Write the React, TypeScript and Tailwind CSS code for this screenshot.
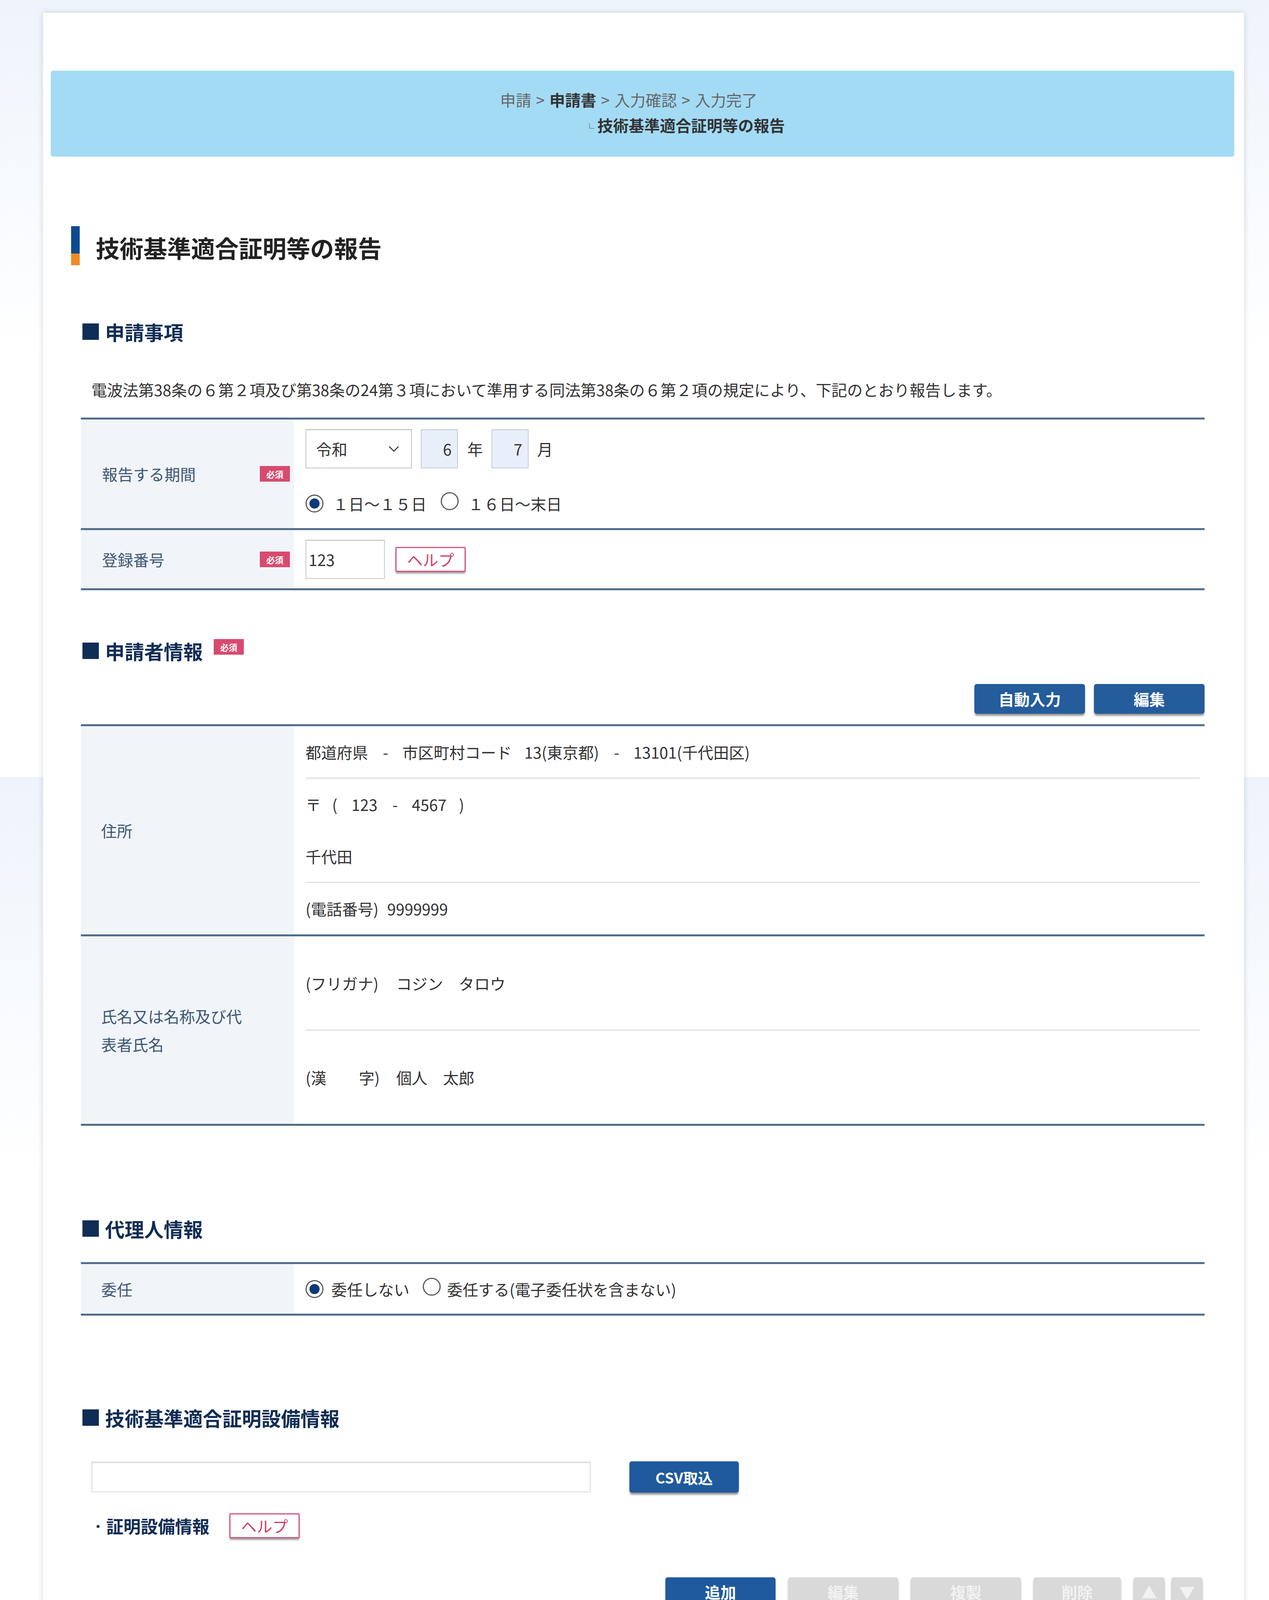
import React from "react";

function Badge() {
  return (
    <span className="inline-flex h-[40px] w-[77px] items-center justify-center bg-[#d94a6e] text-[22px] font-bold leading-none text-white">
      必須
    </span>
  );
}

function Radio({ checked }: { checked?: boolean }) {
  return (
    <span className="inline-flex h-[46px] w-[46px] shrink-0 items-center justify-center rounded-full border-[3px] border-[#5a5a5a] bg-white">
      {checked && <span className="h-[26px] w-[26px] rounded-full bg-[#0b3a7a]" />}
    </span>
  );
}

function HelpButton() {
  return (
    <span className="inline-flex h-[64px] w-[180px] items-center justify-center rounded-[3px] border-[3px] border-[#d4557a] bg-white text-[40px] leading-none text-[#d0406a] shadow-[0_5px_4px_-1px_rgba(0,0,0,0.4)]">
      ヘルプ
    </span>
  );
}

function SectionHeading({ children, badge }: { children: React.ReactNode; badge?: boolean }) {
  return (
    <div className="ml-[29px] flex h-[60px] items-center">
      <span className="h-[42px] w-[42px] bg-[#0f2d55]" />
      <h2 className="ml-[16px] text-[50px] font-bold leading-none text-[#0f2d55]">{children}</h2>
      {badge && (
        <span className="ml-[28px] -mt-[20px]">
          <Badge />
        </span>
      )}
    </div>
  );
}

function FileRow() {
  return (
    <div className="ml-[52px] mt-[82px] flex h-[80px] items-center gap-[99px]">
      <div className="h-[78px] w-[1278px] border-2 border-[#dcdcdc] border-t-[#cfcfcf] bg-white shadow-[inset_0_3px_3px_rgba(0,0,0,0.06)]" />
      <button className="h-[80px] w-[280px] rounded-[6px] bg-[#1f5a9e] text-[38px] font-bold text-white shadow-[0_6px_5px_-1px_rgba(0,0,0,0.45)]">
        CSV取込
      </button>
    </div>
  );
}

function ToolButton({ children, active, wide }: { children: React.ReactNode; active?: boolean; wide?: string }) {
  return (
    <button
      className={
        (active ? "bg-[#1f5a9e] text-white " : "bg-[#d9d9d9] text-[#f2f2f2] ") +
        (wide ?? "w-[282px]") +
        " h-[74px] rounded-[6px] text-[40px] font-bold leading-none shadow-[0_6px_5px_-1px_rgba(0,0,0,0.4)]"
      }
    >
      {children}
    </button>
  );
}

function EquipTable({ headers }: { headers: string[] }) {
  return (
    <>
      <div className="mr-[5px] mt-[99px] flex justify-end">
        <div className="flex gap-[32px]">
          <ToolButton active>追加</ToolButton>
          <ToolButton>編集</ToolButton>
          <ToolButton>複製</ToolButton>
          <ToolButton wide="w-[224px]">削除</ToolButton>
          <div className="flex gap-[17px]">
            <ToolButton wide="w-[80px]">▲</ToolButton>
            <ToolButton wide="w-[80px]">▼</ToolButton>
          </div>
        </div>
      </div>
      <div className="ml-[24px] mt-[30px] w-[2865px] border-x-2 border-b-2 border-[#c9c9c9]">
        <div className="grid h-[88px] grid-cols-[130px_173px_369px_480px_366px_309px_368px_335px_1fr] border-b-[5px] border-t-[4px] border-b-[#d3dbe4] border-t-[#c3d3e3] bg-[#f4f8fb]">
          {headers.map((h, i) => (
            <div
              key={i}
              className="flex items-center justify-center border-l-2 border-[#d2d2d2] text-[31px] font-bold text-[#1b2c4a] first:border-l-0"
            >
              {h}
            </div>
          ))}
        </div>
        <div className="h-[581px] bg-[#efefef]" />
      </div>
    </>
  );
}

export default function App() {
  return (
    <div className="min-h-screen bg-[linear-gradient(to_bottom,#eef4fc_0px,#ffffff_900px,#ffffff_1989px,#eef4fc_1989px,#ffffff_3000px,#ffffff_4177px,#eef4fc_4177px,#ffffff_5000px,#ffffff_5167px,#eef4fc_5167px,#ffffff_6100px)] pb-[34px] pt-[33px] font-['Noto_Sans_CJK_JP','Noto_Sans',sans-serif] text-[#333]">
      <div className="ml-[110px] w-[3074px] bg-white pb-[127px] pt-[148px] shadow-[0_0_14px_rgba(0,0,0,0.16)]">
        {/* breadcrumb */}
        <div className="ml-[20px] mr-[25px] flex h-[220px] items-center justify-center rounded-[6px] bg-[#a3dbf5]">
          <div className="text-[40px] leading-[65px]">
            <div className="text-[#666]">
              申請<span className="mx-[12px]">&gt;</span>
              <span className="font-bold text-[#333]">申請書</span>
              <span className="mx-[12px]">&gt;</span>入力確認<span className="mx-[12px]">&gt;</span>入力完了
            </div>
            <div className="pl-[217px] font-bold text-[#333]">
              <span className="mr-[8px] text-[24px] font-normal text-[#555]">└</span>
              技術基準適合証明等の報告
            </div>
          </div>
        </div>

        <div className="pl-[72px] pr-[101px]">
          {/* title */}
          <div className="mt-[178px] flex h-[100px] items-center">
            <div className="flex h-[100px] w-[22px] flex-col">
              <div className="h-[70px] bg-[#0b4a93]" />
              <div className="h-[30px] bg-[#f08a24]" />
            </div>
            <h1 className="ml-[41px] mt-[8px] text-[61px] font-bold leading-none text-[#222]">技術基準適合証明等の報告</h1>
          </div>

          {/* 申請事項 */}
          <div className="mt-[140px]">
            <SectionHeading>申請事項</SectionHeading>
          </div>
          <p className="ml-[52px] mt-[88px] text-[40px] leading-[60px]">
            電波法第38条の６第２項及び第38条の24第３項において準用する同法第38条の６第２項の規定により、下記のとおり報告します。
          </p>

          <div className="ml-[25px] mt-[42px] border-t-[5px] border-[#4f6d8c]">
            <div className="flex h-[283px] border-b-[5px] border-[#4f6d8c]">
              <div className="flex w-[545px] items-center justify-between bg-[#f1f5f9] pl-[54px] pr-[10px]">
                <span className="text-[40px] text-[#3d5576]">報告する期間</span>
                <Badge />
              </div>
              <div className="flex flex-1 flex-col pl-[30px] pt-[25px]">
                <div className="flex h-[100px] items-center">
                  <div className="flex h-[100px] w-[272px] items-center justify-between border-2 border-[#c4c4c4] border-t-[#b5b5b5] bg-white pl-[25px] pr-[30px] text-[40px]">
                    令和
                    <svg width="28" height="18" viewBox="0 0 28 18" fill="none">
                      <polyline points="2,3 14,15 26,3" stroke="#333" strokeWidth="2.5" />
                    </svg>
                  </div>
                  <div className="ml-[23px] flex h-[100px] w-[95px] items-center justify-end border-2 border-[#c3cad6] bg-[#e8effb] pr-[14px] text-[40px]">
                    6
                  </div>
                  <span className="ml-[24px] text-[40px]">年</span>
                  <div className="ml-[22px] flex h-[100px] w-[95px] items-center justify-end border-2 border-[#c3cad6] bg-[#e8effb] pr-[14px] text-[40px]">
                    7
                  </div>
                  <span className="ml-[22px] text-[40px]">月</span>
                </div>
                <div className="mt-[64px] flex h-[52px] items-center text-[40px]">
                  <Radio checked />
                  <span className="ml-[24px]">１日～１５日</span>
                  <span className="ml-[36px]">
                    <Radio />
                  </span>
                  <span className="ml-[24px]">１６日～末日</span>
                </div>
              </div>
            </div>
            <div className="flex h-[154px] border-b-[5px] border-[#4f6d8c]">
              <div className="flex w-[545px] items-center justify-between bg-[#f1f5f9] pl-[54px] pr-[10px]">
                <span className="text-[40px] text-[#3d5576]">登録番号</span>
                <Badge />
              </div>
              <div className="flex flex-1 items-center pl-[30px]">
                <div className="flex h-[100px] w-[203px] items-center border-2 border-[#c8c8c8] border-t-[#b5b5b5] bg-white pl-[6px] text-[40px]">
                  123
                </div>
                <span className="ml-[27px]">
                  <HelpButton />
                </span>
              </div>
            </div>
          </div>

          {/* 申請者情報 */}
          <div className="mt-[125px]">
            <SectionHeading badge>申請者情報</SectionHeading>
          </div>
          <div className="mt-[55px] flex justify-end gap-[23px]">
            <button className="h-[76px] w-[283px] rounded-[6px] bg-[#245c9c] text-[40px] font-bold text-white shadow-[0_6px_5px_-1px_rgba(0,0,0,0.45)]">
              自動入力
            </button>
            <button className="h-[76px] w-[283px] rounded-[6px] bg-[#245c9c] text-[40px] font-bold text-white shadow-[0_6px_5px_-1px_rgba(0,0,0,0.45)]">
              編集
            </button>
          </div>
          <div className="ml-[25px] mt-[27px] border-t-[5px] border-[#4f6d8c] text-[40px]">
            <div className="flex border-b-[5px] border-[#4f6d8c]">
              <div className="flex w-[545px] items-center bg-[#f1f5f9] pl-[52px] text-[#3d5576]">住所</div>
              <div className="flex-1 pl-[30px] pr-[12px]">
                <div className="flex h-[132px] items-center">
                  <span>都道府県</span>
                  <span className="ml-[38px]">-</span>
                  <span className="ml-[36px]">市区町村コード</span>
                  <span className="ml-[32px]">13(東京都)</span>
                  <span className="ml-[38px]">-</span>
                  <span className="ml-[36px]">13101(千代田区)</span>
                </div>
                <div className="h-[2px] bg-[#d2d2d2]" />
                <div className="flex h-[132px] items-center">
                  <span>〒</span>
                  <span className="ml-[28px]">(</span>
                  <span className="ml-[36px]">123</span>
                  <span className="ml-[38px]">-</span>
                  <span className="ml-[36px]">4567</span>
                  <span className="ml-[32px]">)</span>
                </div>
                <div className="flex h-[133px] items-center">千代田</div>
                <div className="h-[2px] bg-[#d2d2d2]" />
                <div className="flex h-[132px] items-center">
                  <span>(電話番号)</span>
                  <span className="ml-[22px]">9999999</span>
                </div>
              </div>
            </div>
            <div className="flex border-b-[5px] border-[#4f6d8c]">
              <div className="flex w-[545px] items-center bg-[#f1f5f9] pl-[52px] pr-[120px] leading-[72px] text-[#3d5576]">
                氏名又は名称及び代表者氏名
              </div>
              <div className="flex-1 pl-[30px] pr-[12px]">
                <div className="flex h-[239px] items-center">
                  <span className="w-[190px]">(フリガナ)</span>
                  <span className="ml-[42px]">コジン</span>
                  <span className="ml-[40px]">タロウ</span>
                </div>
                <div className="h-[2px] bg-[#d2d2d2]" />
                <div className="flex h-[239px] items-center">
                  <span className="flex w-[190px] justify-between">
                    <span>(漢</span>
                    <span>字)</span>
                  </span>
                  <span className="ml-[42px]">個人</span>
                  <span className="ml-[40px]">太郎</span>
                </div>
              </div>
            </div>
          </div>

          {/* 代理人情報 */}
          <div className="mt-[233px]">
            <SectionHeading>代理人情報</SectionHeading>
          </div>
          <div className="ml-[25px] mt-[56px] border-t-[5px] border-[#4f6d8c] text-[40px]">
            <div className="flex h-[132px] border-b-[5px] border-[#4f6d8c]">
              <div className="flex w-[545px] items-center bg-[#f1f5f9] pl-[52px] text-[#3d5576]">委任</div>
              <div className="flex flex-1 items-center pl-[30px]">
                <Radio checked />
                <span className="ml-[20px]">委任しない</span>
                <span className="ml-[34px]">
                  <Radio />
                </span>
                <span className="ml-[16px]">委任する(電子委任状を含まない)</span>
              </div>
            </div>
          </div>

          {/* 技術基準適合証明設備情報 */}
          <div className="mt-[231px]">
            <SectionHeading>技術基準適合証明設備情報</SectionHeading>
          </div>
          <FileRow />
          <div className="ml-[54px] mt-[52px] flex h-[66px] items-center">
            <span className="text-[30px] font-bold text-[#0f2d55]">・</span>
            <span className="ml-[6px] text-[44px] font-bold text-[#0f2d55]">証明設備情報</span>
            <span className="ml-[51px]">
              <HelpButton />
            </span>
          </div>
          <EquipTable
            headers={["", "選択", "技適の申請者", "特定無線設備の種別", "型式又は名称", "技適番号", "電波の型式等", "証明年月日", "公示希望日"]}
          />

          {/* 工事設計認証設備情報 */}
          <div className="mt-[134px]">
            <SectionHeading>工事設計認証設備情報</SectionHeading>
          </div>
          <FileRow />
          <div className="ml-[54px] mt-[52px] flex h-[66px] items-center">
            <span className="text-[30px] font-bold text-[#0f2d55]">・</span>
            <span className="ml-[6px] text-[44px] font-bold text-[#0f2d55]">認証設備情報</span>
            <span className="ml-[51px]">
              <HelpButton />
            </span>
          </div>
          <EquipTable
            headers={["", "選択", "認証の申請者", "特定無線設備の種別", "型式又は名称", "認証番号", "電波の型式等", "認証年月日", "公示希望日"]}
          />
        </div>

        {/* footer */}
        <div className="ml-[20px] mr-[25px] mt-[216px]">
          <div className="flex h-[253px] items-center justify-between bg-[#f3f6f9] pl-[104px] pr-[70px]">
            <button className="h-[92px] w-[522px] rounded-[8px] border-[3px] border-[#2d4a6b] bg-white text-[45px] text-[#2c4060] shadow-[0_8px_6px_-2px_rgba(0,0,0,0.35)]">
              マイページに戻る
            </button>
            <div className="flex items-center">
              <div className="border-[14px] border-[#ff0000] bg-white pb-[15px] pl-[16px] pr-[13px] pt-[16px]">
                <button className="h-[88px] w-[280px] rounded-[8px] bg-linear-to-b from-[#0c3360] to-[#0a5aad] text-[45px] font-bold text-white shadow-[0_6px_5px_-1px_rgba(0,0,0,0.45)]">
                  一時保存
                </button>
              </div>
              <div className="border-[14px] border-l-0 border-[#ff0000] bg-[#f7f9fb] pb-[14px] pl-[12px] pr-[16px] pt-[12px]">
                <button className="h-[88px] w-[357px] rounded-[8px] bg-linear-to-b from-[#eb7625] to-[#f89a43] text-[45px] font-bold text-white shadow-[0_6px_5px_-1px_rgba(0,0,0,0.45)]">
                  入力完了
                </button>
              </div>
            </div>
          </div>
          <div className="h-[18px] bg-[#0b3158]" />
        </div>
      </div>
    </div>
  );
}
